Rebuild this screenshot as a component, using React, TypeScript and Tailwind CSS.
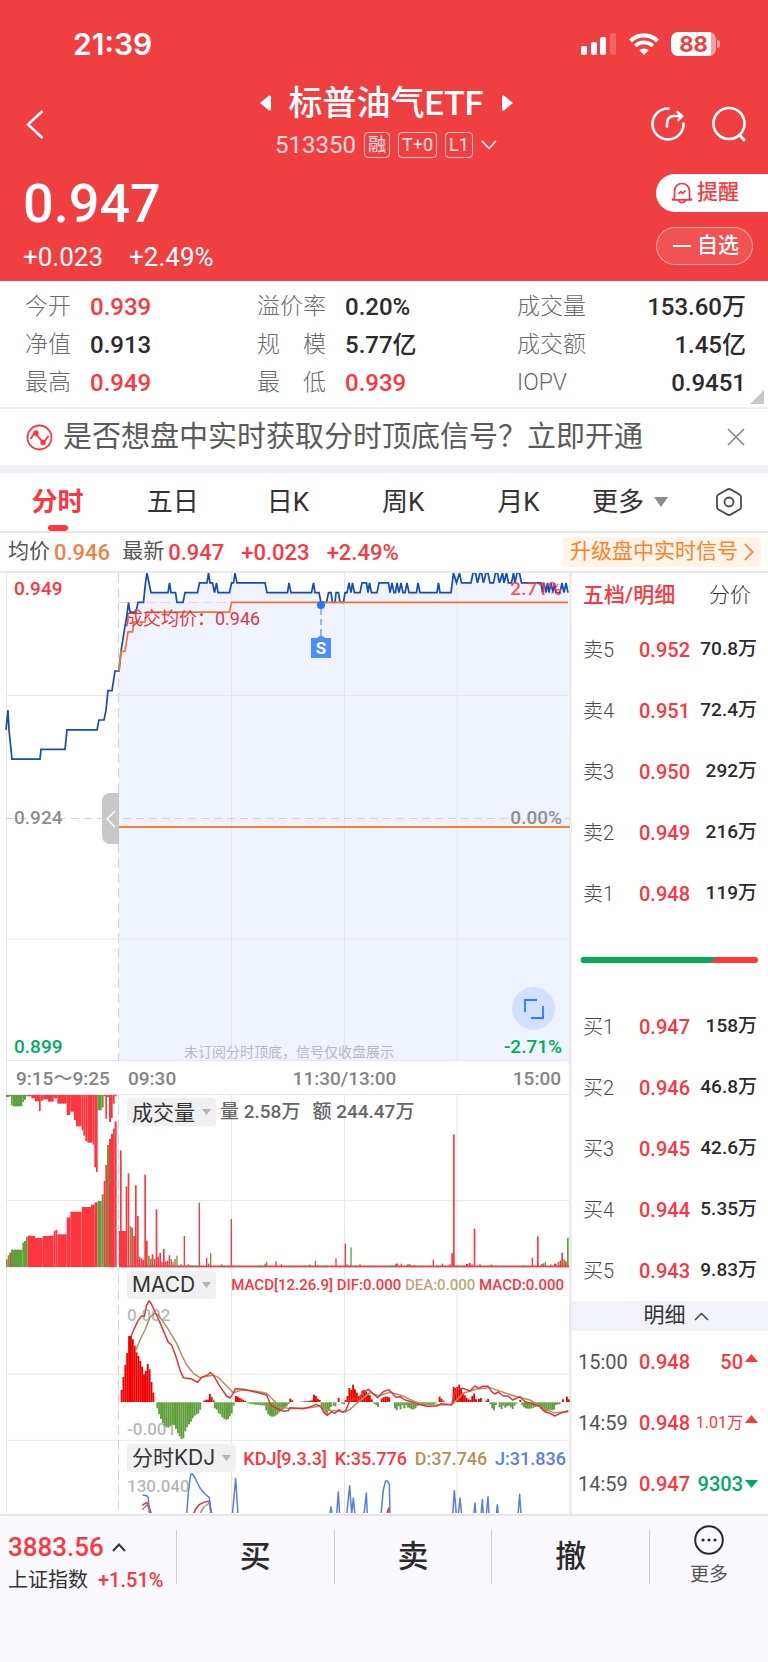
import { ReactNode } from "react";
import { clsx } from "clsx";

type Point = [number, number];
// x, width, height, up (red) or down (green)
type Bar = [number, number, number, "r" | "g"];

const RED = "#fd3640";
const GREEN = "#5fa03c";
const GRID = "#e6e6e8";

const PRICE: Point[] = [
  [6, 933], [8, 935], [9, 933], [12, 930], [40, 930], [41, 931], [65, 931], [67, 933], [97, 933],
  [99, 934], [104, 934], [106, 935], [108, 937], [112, 937], [115, 939], [119, 939], [121, 941],
  [125, 943.6], [126.5, 944.4], [128.5, 946], [130, 945], [136, 945], [138, 946], [143.5, 946],
  [145.5, 948], [147, 949], [151, 947], [168, 947], [169.5, 948], [171, 947], [175.5, 947],
  [177, 946], [183, 946], [185, 947], [197.5, 947], [199.5, 948], [207, 948], [208.5, 949],
  [210, 948], [212.5, 948], [214.5, 947], [216.5, 948], [218, 947], [229.5, 947], [231.5, 948],
  [233.5, 948], [235, 949], [237, 948], [265, 948], [267, 947], [287.5, 947], [289, 948],
  [291, 947], [311.5, 947], [313.5, 948], [315, 947], [319, 947], [321, 946], [326.5, 946],
  [328.5, 947], [331, 947], [332.5, 946], [335, 946], [336, 947], [338.5, 947], [340, 946],
  [343.5, 946], [345, 947], [347, 947], [349, 948], [351, 947], [352.5, 948], [354.5, 947],
  [360, 947], [362, 948], [366.5, 948], [368, 947], [369.5, 948], [371.5, 947], [377, 947],
  [379, 948], [388.5, 948], [390, 947], [392, 948], [394, 947], [395.5, 947], [397, 948],
  [399, 947], [401, 948], [403, 947], [405, 947], [407, 948], [409, 947], [416.5, 947],
  [418, 948], [420, 947], [437, 947], [438.5, 948], [440, 947], [451, 947], [453.5, 949],
  [456.5, 948], [459.5, 949], [461.5, 948], [471, 948], [473, 949], [475.5, 949], [477.5, 948],
  [480, 949], [481.5, 949], [483.5, 948], [486, 949], [488, 949], [490, 948], [493.5, 948],
  [495.5, 949], [497.5, 949], [499.5, 948], [502.5, 949], [504, 948], [506.5, 949], [508.5, 948],
  [511.5, 948], [513.5, 949], [515, 948], [517, 949], [519.5, 949], [521.5, 948], [541, 948],
  [542.5, 947], [544, 948], [546, 947], [547.5, 948], [549, 947], [551, 948], [553, 947],
  [554.5, 948], [556, 947], [560, 947], [562, 948], [564, 947], [566, 948], [568, 947],
];

const AVERAGE: Point[] = [
  [119, 939], [121, 941], [125, 941], [128, 943], [132.5, 943], [134, 944], [145, 944],
  [146.5, 945], [229.5, 945], [231.5, 946], [568, 946],
];

const AUCTION_TOP: Bar[] = [
  [18, 10, 6, "g"], [28, 5, 4, "r"], [33, 5, 31, "g"], [38, 29, 34, "g"], [67, 5, 21, "g"],
  [72, 6, 14, "g"], [78, 5, 4, "g"], [83, 11, 4, "r"], [94, 11, 10, "r"], [105, 12, 19, "r"],
  [117, 5, 48, "r"], [122, 8, 17, "r"], [130, 14, 13, "r"], [144, 17, 20, "r"], [161, 11, 10, "r"],
  [172, 28, 26, "r"], [200, 11, 60, "r"], [211, 11, 50, "r"], [222, 6, 75, "r"], [228, 17, 94, "r"],
  [245, 5, 106, "r"], [250, 6, 122, "r"], [256, 6, 138, "r"], [262, 16, 143, "r"],
  [278, 5, 149, "r"], [283, 5, 217, "r"], [288, 5, 231, "r"], [293, 12, 46, "g"],
  [305, 6, 38, "g"], [311, 5, 4, "r"], [316, 5, 71, "r"], [321, 6, 6, "g"], [327, 6, 81, "r"],
  [333, 5, 69, "r"], [338, 6, 26, "r"], [344, 6, 4, "r"],
];

const VOLUME: Bar[] = [
  [18, 5, 23, "g"], [23, 5, 35, "g"], [28, 5, 43, "r"], [33, 34, 52, "g"], [67, 5, 73, "g"],
  [72, 6, 78, "g"], [78, 5, 90, "g"], [83, 22, 94, "r"], [105, 23, 87, "r"], [128, 22, 93, "r"],
  [150, 11, 94, "r"], [161, 5, 107, "r"], [166, 6, 112, "r"], [172, 28, 98, "r"],
  [200, 11, 149, "r"], [211, 34, 166, "r"], [245, 28, 180, "r"], [273, 11, 187, "r"],
  [284, 9, 194, "r"], [293, 12, 198, "g"], [305, 6, 218, "g"], [311, 5, 258, "r"],
  [316, 5, 306, "r"], [321, 6, 366, "g"], [327, 6, 384, "r"], [333, 6, 399, "r"],
  [339, 5, 415, "r"], [344, 6, 437, "r"],
  [357, 21, 108, "r"], [360, 5, 350, "r"], [377, 5, 242, "r"], [383, 5, 281, "r"],
  [389, 5, 122, "g"], [394, 5, 118, "r"], [400, 5, 93, "r"], [405, 5, 245, "r"],
  [411, 5, 153, "r"], [416, 5, 31, "r"], [422, 5, 26, "r"], [427, 5, 21, "r"], [433, 5, 277, "r"],
  [438, 5, 79, "r"], [444, 5, 34, "g"], [450, 5, 25, "g"], [455, 5, 38, "r"], [461, 5, 24, "r"],
  [467, 5, 173, "r"], [472, 5, 31, "r"], [478, 5, 42, "r"], [484, 4, 15, "r"], [489, 5, 54, "r"],
  [495, 5, 17, "r"], [501, 4, 18, "r"], [506, 5, 35, "r"], [512, 4, 23, "g"], [517, 4, 16, "g"],
  [523, 4, 24, "r"], [529, 4, 34, "g"], [541, 4, 8, "r"], [551, 4, 93, "r"], [563, 4, 8, "r"],
  [596, 4, 193, "r"], [618, 4, 27, "r"], [624, 4, 10, "r"], [630, 4, 42, "g"], [663, 4, 8, "r"],
  [692, 4, 144, "r"], [793, 4, 10, "g"], [798, 4, 16, "g"], [826, 4, 17, "r"], [842, 4, 8, "r"],
  [927, 4, 7, "r"], [944, 4, 18, "g"], [950, 4, 6, "r"], [1006, 4, 26, "r"], [1034, 4, 70, "r"],
  [1039, 4, 8, "r"], [1051, 4, 59, "g"], [1078, 4, 8, "r"], [1186, 8, 10, "r"],
  [1202, 4, 10, "r"], [1220, 12, 8, "g"], [1241, 4, 6, "r"], [1298, 4, 22, "r"],
  [1325, 4, 10, "r"], [1348, 4, 8, "r"], [1354, 5, 41, "r"], [1359, 5, 398, "r"],
  [1398, 6, 9, "r"], [1406, 6, 12, "r"], [1414, 4, 8, "r"], [1421, 5, 115, "r"],
  [1438, 4, 8, "r"], [1472, 5, 7, "r"], [1595, 4, 28, "r"], [1611, 5, 92, "r"],
  [1623, 5, 9, "g"], [1628, 5, 11, "g"], [1634, 4, 15, "g"], [1651, 4, 8, "g"],
  [1662, 8, 10, "r"], [1673, 5, 15, "g"], [1679, 5, 19, "r"], [1684, 5, 43, "r"],
  [1690, 5, 23, "g"], [1695, 5, 17, "r"], [1701, 5, 88, "g"],
];

// start x followed by the signed heights of the bars, one bar every 5.6 units
const MACD_RUNS: [number, number[]][] = [
  [362, [36, 75, 111, 147, 198, 198, 188, 169, 149, 138, 123, 106, 83, 93, 114, 98, 60, 28]],
  [469, [-18, -35, -50, -62, -71, -75, -76, -71, -66, -68, -79, -92, -102, -110, -108, -87, -75, -66, -58, -48, -40, -36, -33, -22]],
  [610, [4, 7, 7, 24, 14, 5]],
  [642, [-18, -22, -33, -36, -45, -50, -52, -50, -42, -33, -10]],
  [705, [18, 16, 12, 10, 6, 3]],
  [740, [-2, -4, -5, -6, -7, -7, -8, -9, -9, -10, -24, -35, -40, -43, -43, -40, -36, -30, -26, -22, -16, -12, -5]],
  [868, [10, 5]],
  [900, [1, 1, 2, 2, 3, 4, 5, 22, 18, 10, 6]],
  [962, [-12, -24, -31, -34, -26, -14]],
  [998, [-10, -12]],
  [1013, [12]],
  [1024, [-4, -6]],
  [1034, [6, 18, 42, 36, 52, 38, 28, 18, 22, 34, 36, 30, 24, 20, 8]],
  [1120, [-4, -8, -14]],
  [1142, [10, 14, 16, 16, 14]],
  [1182, [-18, -24, -12, -21, -8, -18, -9, -15, -18, -21, -21, -18, -12, -8, -8, -8, -7, -7, -8, -8, -7, -6, -3]],
  [1316, [16, 10, 4]],
  [1358, [45, 42, 45, 52, 42, 28, 20, 12, 8, 6, 18, 25, 8]],
  [1434, [9, 12]],
  [1456, [4, 9]],
  [1468, [-6, -18, -24, -8]],
  [1496, [-14, -20, -10, -16, -12, -10, -15, -20, -10, -4]],
  [1558, [6]],
  [1564, [-9, -15, -18, -19, -19, -18, -16, -14, -12, -14, -20, -26, -28, -28, -26, -22, -24, -22, -8, -6, -6]],
  [1686, [8]],
  [1698, [16, 8]],
];

const DIF =
  "393,230 402,208 415,180 425,168 433,169 440,135 447,123 453,130 470,165 485,200 505,247 515,255 528,290 540,330 550,353 575,357 593,367 605,352 625,344 630,337 640,345 660,380 680,408 690,414 700,400 706,386 730,388 770,397 800,405 812,435 830,445 850,454 865,452 870,443 910,446 932,440 950,433 962,440 972,458 982,466 995,455 1005,460 1016,449 1028,457 1038,450 1048,425 1060,415 1075,420 1090,398 1105,388 1115,397 1133,413 1150,395 1167,389 1188,412 1200,410 1215,420 1235,425 1255,433 1280,439 1310,438 1325,431 1355,434 1362,405 1370,390 1390,385 1410,393 1425,378 1437,385 1447,379 1465,379 1475,395 1485,402 1495,396 1510,408 1525,408 1538,420 1560,410 1575,425 1600,432 1620,440 1635,455 1650,460 1665,468 1680,460 1705,452";
const DEA =
  "408,270 420,240 435,210 450,172 463,160 475,165 500,200 530,250 545,285 560,315 580,340 600,353 625,348 640,346 655,352 680,378 700,398 725,390 760,392 800,400 820,420 840,440 870,446 930,443 960,438 980,450 1010,453 1035,456 1050,448 1070,430 1110,398 1135,407 1170,397 1200,405 1230,418 1260,431 1300,435 1355,434 1370,420 1390,400 1430,387 1470,383 1510,397 1550,410 1590,420 1630,445 1660,458 1705,455";

const KDJ_J = [
  "428,706 440,708 445,714 448,765",
  "560,765 565,700 572,645 577,642 585,655 600,685 615,703 628,714 633,765",
  "697,765 707,657 714,765",
  "989,765 993,742 997,765",
  "1010,765 1015,697 1019,765",
  "1040,765 1049,678 1055,765 1060,715 1065,765",
  "1092,765 1099,700 1102,765",
  "1143,765 1150,690 1157,664 1163,664 1168,675 1170,765",
  "1358,765 1363,693 1369,765",
  "1375,765 1380,715 1385,765",
  "1421,765 1425,730 1428,765",
  "1443,765 1447,720 1450,765",
  "1459,765 1464,711 1467,765",
  "1489,765 1492,735 1495,765",
  "1554,765 1559,704 1563,765",
];

const toPoints = (data: Point[]) => data.map(([x, p]) => `${x},${(949 - p) * 9.8}`).join(" ");

const quotes = [
  [
    { label: "今开", value: "0.939", up: true },
    { label: "净值", value: "0.913" },
    { label: "最高", value: "0.949", up: true },
  ],
  [
    { label: "溢价率", value: "0.20%" },
    { label: "规　模", value: "5.77亿" },
    { label: "最　低", value: "0.939", up: true },
  ],
  [
    { label: "成交量", value: "153.60万" },
    { label: "成交额", value: "1.45亿" },
    { label: "IOPV", value: "0.9451" },
  ],
];

const asks = [
  ["卖5", "0.952", "70.8万"],
  ["卖4", "0.951", "72.4万"],
  ["卖3", "0.950", "292万"],
  ["卖2", "0.949", "216万"],
  ["卖1", "0.948", "119万"],
];

const bids = [
  ["买1", "0.947", "158万"],
  ["买2", "0.946", "46.8万"],
  ["买3", "0.945", "42.6万"],
  ["买4", "0.944", "5.35万"],
  ["买5", "0.943", "9.83万"],
];

const trades = [
  { time: "15:00", price: "0.948", amount: "50", up: true },
  { time: "14:59", price: "0.948", amount: "1.01万", up: true, small: true },
  { time: "14:59", price: "0.947", amount: "9303", up: false },
];

function StatusBar() {
  return (
    <div className="flex h-[86px] items-center justify-between pt-[2px] pr-12 pl-[73px]">
      <span className="font-[Inter,sans-serif] text-[30px] font-semibold">21:39</span>
      <div className="flex items-center gap-3">
        <svg width="36" height="24" viewBox="0 0 36 24" fill="#fff" aria-hidden="true">
          <rect x="0" y="14" width="6" height="9" rx="2" />
          <rect x="10" y="10" width="6" height="13" rx="2" />
          <rect x="19" y="5" width="6" height="18" rx="2" />
          <rect x="29" y="1" width="6" height="22" rx="2" opacity="0.2" />
        </svg>
        <svg width="30" height="22" viewBox="0 0 30 22" aria-hidden="true">
          <path d="M1.500 8 A19 19 0 0 1 28.500 8" fill="none" stroke="#fff" strokeWidth="4.200" />
          <path d="M6.200 13 A12.500 12.500 0 0 1 23.800 13" fill="none" stroke="#fff" strokeWidth="3.800" />
          <path d="M10.300 17.200 A7 7 0 0 1 19.700 17.200 L15 22 Z" fill="#fff" />
        </svg>
        <div className="flex items-center gap-px">
          <span className="flex h-6 w-[45px] items-center justify-center rounded-[7px] bg-linear-to-r from-white from-88% to-white/50 to-88% font-[Inter,sans-serif] text-[22px] font-bold text-[#f03f41]">
            88
          </span>
          <span className="h-2 w-[3px] rounded-r-full bg-white/50" />
        </div>
      </div>
    </div>
  );
}

function Tag({ children }: { children: ReactNode }) {
  return (
    <span className="flex h-[26px] items-center rounded-[4px] border border-white/70 px-[3px] text-[18px] leading-none text-white/85">
      {children}
    </span>
  );
}

function Header() {
  return (
    <header className="bg-[#f03f41] text-white">
      <StatusBar />
      <div className="flex h-[76px] items-center justify-between pr-[22px] pl-[26px]">
        <button type="button" aria-label="返回" className="w-[95px]">
          <svg width="18" height="30" viewBox="0 0 18 30" fill="none" stroke="#fff" strokeWidth="2.500">
            <path d="M16.500 2 L2 15.500 L16.500 29" />
          </svg>
        </button>
        <div className="flex flex-col items-center pb-1">
          <div className="flex items-center gap-[18px]">
            <button type="button" aria-label="上一只">
              <svg width="11" height="16" viewBox="0 0 11 16" fill="#fff">
                <path d="M0 8 L9 0.600 Q11 0 11 2 V14 Q11 16 9 15.400 Z" />
              </svg>
            </button>
            <h1 className="text-[34px] leading-[34px] font-medium">标普油气ETF</h1>
            <button type="button" aria-label="下一只">
              <svg width="11" height="16" viewBox="0 0 11 16" fill="#fff">
                <path d="M11 8 L2 0.600 Q0 0 0 2 V14 Q0 16 2 15.400 Z" />
              </svg>
            </button>
          </div>
          <div className="mt-3 flex items-center gap-2">
            <span className="text-[24px] leading-[26px] text-white/80">513350</span>
            <Tag>融</Tag>
            <Tag>T+0</Tag>
            <Tag>L1</Tag>
            <svg width="16" height="10" viewBox="0 0 16 10" fill="none" stroke="#fff" strokeWidth="1.500">
              <path d="M1 1 L8 8.500 L15 1" />
            </svg>
          </div>
        </div>
        <div className="flex gap-[27px]">
          <button type="button" aria-label="分享">
            <svg width="34" height="36" viewBox="0 0 34 36" fill="none" stroke="#fff" strokeWidth="2.600" strokeLinecap="round">
              <path d="M17.500 2.500 A15.500 15.500 0 1 0 32.500 17.500" />
              <path d="M16 20.500 V18 Q16 10 23 10 H30" />
              <path d="M26.500 6 L31 10 L27.500 14" />
            </svg>
          </button>
          <button type="button" aria-label="搜索">
            <svg width="34" height="36" viewBox="0 0 34 36" fill="none" stroke="#fff" strokeWidth="2.600" strokeLinecap="round">
              <circle cx="17" cy="17.500" r="15.500" />
              <path d="M27.500 29 L32 34" strokeWidth="3" />
            </svg>
          </button>
        </div>
      </div>
      <div className="flex h-[119px] items-start justify-between pt-[2px] pl-[23px]">
        <div>
          <p className="mt-2 text-[54px] leading-[64px] font-medium">0.947</p>
          <p className="mt-2 flex gap-[26px] text-[26px] leading-[26px]">
            <span>+0.023</span>
            <span>+2.49%</span>
          </p>
        </div>
        <div className="mt-[10px] flex w-28 flex-col gap-[15px]">
          <button type="button" className="flex h-[38px] items-center gap-1 rounded-l-full bg-white pl-[15px] text-[21px] font-medium text-[#fd3640]">
            <svg width="22" height="22" viewBox="0 0 22 22" fill="none" stroke="currentColor" strokeWidth="1.700" strokeLinejoin="round">
              <path d="M3.500 16 V9 A7.500 7.500 0 0 1 18.500 9 V16 L20.500 17.800 H1.500 Z" />
              <path d="M7.500 12 L10 9.500 L11.500 11.500 L14.500 8.500" />
              <path d="M7 18 Q11 23.500 15 18" />
            </svg>
            提醒
          </button>
          <button type="button" className="mr-[15px] flex h-[38px] items-center gap-[6px] rounded-full border border-white/50 bg-white/10 pl-4 text-[21px] font-medium">
            <span className="h-[2px] w-[18px] bg-white" />
            自选
          </button>
        </div>
      </div>
    </header>
  );
}

function Quotes() {
  return (
    <section className="relative grid grid-cols-[232px_1fr_229px] border-b-2 border-[#f1f1f3] pt-[7px] pr-[22px] pb-[5px] pl-[25px]">
      {quotes.map((group, i) => (
        <dl key={i}>
          {group.map(({ label, value, up }) => (
            <div key={label} className={clsx("flex h-[38px] items-center", i === 2 && "justify-between")}>
              <dt className={clsx("text-[23px] font-light text-[#6a6a6a]", i === 0 && "w-[65px]", i === 1 && "w-[88px]")}>
                {label}
              </dt>
              <dd className={clsx("text-[24px] font-medium", up ? "text-[#fd3640]" : "text-[#2b2b2b]")}>{value}</dd>
            </div>
          ))}
        </dl>
      ))}
      <svg width="14" height="14" viewBox="0 0 14 14" fill="#c8c8ca" className="absolute right-1 bottom-[3px]">
        <path d="M14 0 V14 H0 Z" />
      </svg>
    </section>
  );
}

function Banner() {
  return (
    <section className="flex h-16 items-center border-b-8 border-[#f2f3f8] pr-[23px] pl-[26px]">
      <svg width="27" height="27" viewBox="0 0 27 27" fill="none" stroke="#fd3640" strokeWidth="1.800">
        <circle cx="13.500" cy="13.500" r="12" />
        <path d="M4.500 15 L8.500 9 L17.500 18.500 L22.500 12" />
        <circle cx="10" cy="9" r="1.800" fill="#fd3640" />
        <circle cx="17" cy="18.500" r="1.800" fill="#fd3640" />
      </svg>
      <a href="#signal" className="ml-[10px] flex-1 text-[29px] leading-[36px] whitespace-nowrap text-[#5a5a5a]">
        是否想盘中实时获取分时顶底信号？立即开通
      </a>
      <button type="button" aria-label="关闭">
        <svg width="18" height="18" viewBox="0 0 18 18" stroke="#808080" strokeWidth="1.500">
          <path d="M1 1 L17 17 M17 1 L1 17" />
        </svg>
      </button>
    </section>
  );
}

function Tabs() {
  return (
    <nav className="flex h-[60px] items-center border-b-2 border-[#e9e9eb] text-[26px] text-[#333]">
      <button type="button" className="relative h-full w-[15%] font-bold text-[#fd3640]">
        分时
        <span className="absolute bottom-0 left-1/2 h-[6px] w-5 -translate-x-1/2 rounded-full bg-[#fd3640]" />
      </button>
      <button type="button" className="w-[15%]">五日</button>
      <button type="button" className="w-[15%]">日K</button>
      <button type="button" className="w-[15%]">周K</button>
      <button type="button" className="w-[15%]">月K</button>
      <button type="button" className="flex flex-1 items-center gap-[10px] pl-4">
        更多
        <svg width="14" height="10" viewBox="0 0 14 10" fill="#8c8c8c">
          <path d="M0 0 H14 L7 10 Z" />
        </svg>
      </button>
      <button type="button" aria-label="设置" className="pr-[25px]">
        <svg width="28" height="30" viewBox="0 0 28 30" fill="none" stroke="#4a4a4a" strokeWidth="1.800" strokeLinejoin="round">
          <path d="M12.500 2.400 Q14 1.600 15.500 2.400 L24.500 7.500 Q26 8.400 26 10 V20 Q26 21.600 24.500 22.500 L15.500 27.600 Q14 28.400 12.500 27.600 L3.500 22.500 Q2 21.600 2 20 V10 Q2 8.400 3.500 7.500 Z" />
          <circle cx="14" cy="15" r="4.500" />
        </svg>
      </button>
    </nav>
  );
}

function Summary() {
  return (
    <div className="flex h-10 items-center justify-between border-b-2 border-[#e9e9eb] pr-[7px] pl-2 text-[21px] text-[#555]">
      <p className="flex items-center">
        均价<span className="ml-1 text-[22px] font-medium text-[#ee8146]">0.946</span>
        <span className="ml-3">最新</span>
        <span className="ml-1 text-[22px] font-medium text-[#fd3640]">0.947</span>
        <span className="ml-[17px] text-[22px] font-medium text-[#fd3640]">+0.023</span>
        <span className="ml-[17px] text-[22px] font-medium text-[#fd3640]">+2.49%</span>
      </p>
      <a href="#upgrade" className="flex h-[30px] items-center gap-[6px] rounded-[3px] bg-[#fff3ea] px-[7px] text-[#fb8227]">
        升级盘中实时信号
        <svg width="10" height="18" viewBox="0 0 10 18" fill="none" stroke="currentColor" strokeWidth="1.800">
          <path d="M1 1 L8.500 9 L1 17" />
        </svg>
      </a>
    </div>
  );
}

function PricePanel() {
  return (
    <div className="relative h-[488px] text-[19px] leading-6 font-medium">
      <svg viewBox="0 0 570 488" preserveAspectRatio="none" className="block h-full w-full">
        <polygon
          points={`${toPoints(PRICE.filter(([x]) => x >= 119))} 570,488 119,488`}
          fill="#eff3fe"
        />
        <path d="M6.500 0 V488 M231.500 0 V488 M344.500 0 V488 M457 0 V488 M569.500 0 V488 M6 122.500 H570 M6 366 H570 M6 487.500 H570" stroke={GRID} fill="none" />
        <path d="M118.500 0 V488" stroke="#d4d4d4" strokeDasharray="10 5" />
        <path d="M6 245.500 H570" stroke="#c5d5e3" strokeDasharray="8 5" />
        <path d="M119 29.500 H231" stroke="#f9cdd4" strokeDasharray="9 5" />
        <path d="M119 254 H570" stroke="#fa7d32" strokeWidth="1.800" />
        <polyline points={toPoints(PRICE)} fill="none" stroke="#164cb4" strokeWidth="1.700" />
        <polyline points={toPoints(AVERAGE)} fill="none" stroke="#fb7032" strokeWidth="1.700" />
      </svg>
      <span className="absolute top-1 left-[14px] text-[#fd3640]">0.949</span>
      <span className="absolute top-1 right-2 text-[#fd3640]/85">2.71%</span>
      <span className="absolute top-[34px] left-[125px] text-[18px] font-normal text-[#e0393f]">成交均价：0.946</span>
      <span className="absolute top-[233px] left-[14px] text-[#8e8e8e]">0.924</span>
      <span className="absolute top-[233px] right-2 text-[#8e8e8e]">0.00%</span>
      <span className="absolute bottom-[2px] left-[14px] text-[#00ab5b]">0.899</span>
      <span className="absolute right-2 bottom-[2px] text-[#00ab5b]">-2.71%</span>
      <span className="absolute bottom-0 left-[184px] text-[14px] leading-[18px] font-normal text-[#b9b9bb]">
        未订阅分时顶底，信号仅收盘展示
      </span>
      <div className="absolute top-7 left-[56.3%] flex -translate-x-1/2 flex-col items-center">
        <span className="size-2 rounded-full bg-[#2277ff]" />
        <span className="h-[26px] border-l-2 border-dashed border-[#8db6ff]" />
        <svg width="8" height="3" viewBox="0 0 8 3" fill="#4c8dff">
          <path d="M0 3 L4 0 L8 3 Z" />
        </svg>
        <span className="flex size-5 items-center justify-center bg-[#4c8dff] text-[17px] font-bold text-white">S</span>
      </div>
      <button type="button" aria-label="收起" className="absolute top-[220px] left-[102px] flex h-[51px] w-[17px] items-center justify-center rounded-l-lg bg-[#c8c8c8]">
        <svg width="10" height="18" viewBox="0 0 10 18" fill="none" stroke="#fff" strokeWidth="1.500">
          <path d="M9 1 L1 9 L9 17" />
        </svg>
      </button>
      <button type="button" aria-label="全屏" className="absolute right-[15px] bottom-[31px] flex size-[43px] items-center justify-center rounded-full bg-[#d2e0fe]">
        <svg width="20" height="20" viewBox="0 0 20 20" fill="none" stroke="#2f7bff" strokeWidth="1.800">
          <path d="M13 1 H1 V13 M7 19 H19 V7" />
        </svg>
      </button>
    </div>
  );
}

function Chip({ children }: { children: ReactNode }) {
  return (
    <button type="button" className="flex h-7 items-center gap-[7px] rounded-[4px] bg-[#f0f0f1] px-[5px] font-[Inter,'Noto_Sans_CJK_SC',sans-serif] text-[21px] whitespace-nowrap text-[#333]">
      {children}
      <svg width="9" height="6" viewBox="0 0 9 6" fill="#b4b4b6">
        <path d="M0 0 H9 L4.500 6 Z" />
      </svg>
    </button>
  );
}

function SubPanel({
  viewBox,
  className,
  header,
  children,
  grid,
}: {
  viewBox: string;
  className: string;
  header: ReactNode;
  children: ReactNode;
  grid: string;
}) {
  return (
    <div className={clsx("relative overflow-hidden", className)}>
      <svg viewBox={viewBox} preserveAspectRatio="none" className="block h-full w-full">
        <path d={grid} stroke={GRID} strokeWidth="3" fill="none" />
        <path d="M355.500 0 V810" stroke="#d4d4d4" strokeWidth="3" strokeDasharray="30 15" />
        {children}
      </svg>
      <div className="absolute top-[3px] right-1 left-[127px] flex items-center">{header}</div>
    </div>
  );
}

function VolumePanel() {
  return (
    <SubPanel
      viewBox="0 287 1710 519"
      className="h-[173px]"
      grid="M19.500 0 V810 M694.500 0 V810 M1033.500 0 V810 M1371 0 V810 M1708.500 0 V810 M18 604 H1710 M18 804 H1710"
      header={
        <>
          <Chip>成交量</Chip>
          <span className="ml-1 text-[19px] font-medium text-[#666]">量 2.58万</span>
          <span className="ml-3 text-[19px] font-medium text-[#666]">额 244.47万</span>
        </>
      }
    >
      {AUCTION_TOP.map(([x, w, h, tone]) => (
        <rect key={x} x={x} y={287} width={w} height={h} fill={tone === "r" ? RED : GREEN} />
      ))}
      {VOLUME.map(([x, w, h, tone]) => (
        <rect key={x} x={x} y={803 - h} width={w} height={h} fill={tone === "r" ? RED : GREEN} />
      ))}
      <path d="M357 801 H1706" stroke={RED} strokeWidth="5" />
      <path d="M516 801 H1706" stroke={GREEN} strokeWidth="5" strokeDasharray="6 52 12 84 6 38" />
    </SubPanel>
  );
}

function MacdPanel() {
  return (
    <SubPanel
      viewBox="0 24 1710 519"
      className="h-[173px]"
      grid="M19.500 0 V600 M694.500 0 V600 M1033.500 0 V600 M1371 0 V600 M1708.500 0 V600 M18 343 H1710 M18 541 H1710"
      header={
        <>
          <Chip>MACD</Chip>
          <span className="ml-[15px] flex flex-1 justify-between pr-[2px] text-[15px] font-medium whitespace-nowrap text-[#fd3640]">
            <span>MACD[12.26.9]</span>
            <span>DIF:0.000</span>
            <span className="text-[#bfa67a]">DEA:0.000</span>
            <span>MACD:0.000</span>
          </span>
        </>
      }
    >
      {MACD_RUNS.flatMap(([start, heights]) =>
        heights.map((h, i) => (
          <rect
            key={`${start}-${i}`}
            x={start + i * 5.6}
            y={h > 0 ? 426 - h : 427}
            width={5.7}
            height={Math.abs(h)}
            fill={h > 0 ? "#f00000" : GREEN}
          />
        )),
      )}
      <polyline points={DEA} fill="none" stroke="#b0925a" strokeWidth="4.500" strokeLinejoin="round" />
      <polyline points={DIF} fill="none" stroke="#e2333b" strokeWidth="4.500" strokeLinejoin="round" />
    </SubPanel>
  );
}

function KdjPanel() {
  return (
    <SubPanel
      viewBox="0 544 1710 216"
      className="h-[72px]"
      grid="M19.500 0 V800 M694.500 0 V800 M1033.500 0 V800 M1371 0 V800 M1708.500 0 V800"
      header={
        <>
          <Chip>分时KDJ</Chip>
          <span className="ml-[7px] flex flex-1 justify-between text-[18px] font-medium whitespace-nowrap text-[#fd3640]">
            <span>KDJ[9.3.3]</span>
            <span>K:35.776</span>
            <span className="text-[#b0925a]">D:37.746</span>
            <span className="text-[#5a7de0]">J:31.836</span>
          </span>
        </>
      }
    >
      <g fill="none" strokeWidth="4.500" strokeLinejoin="round">
        <path d="M427 750 L440 736 L448 745 L456 765 M598 765 L612 742 L628 730 L637 765" stroke="#b0925a" />
        <path d="M427 737 L440 728 L447 740 L452 765 M580 765 Q592 726 628 725 L634 765 M1160 765 L1166 745 L1168 765" stroke="#e2333b" />
        {KDJ_J.map((points) => (
          <polyline key={points} points={points} stroke="#5a7de0" />
        ))}
      </g>
    </SubPanel>
  );
}

function Charts() {
  return (
    <div className="min-w-0">
      <PricePanel />
      <div className="relative ml-[6px] grid h-[34px] grid-cols-[113px_1fr_1fr_1fr] items-center border-x border-b border-[#e6e6e8] pt-1 text-[19px] font-medium text-[#848484]">
        <span className="pl-[9px] whitespace-nowrap">9:15～9:25</span>
        <span className="pl-2">09:30</span>
        <span className="text-center">11:30/13:00</span>
        <span className="pr-2 text-right">15:00</span>
      </div>
      <VolumePanel />
      <div className="relative">
        <MacdPanel />
        <span className="absolute top-[35px] left-[127px] text-[17px] leading-6 font-medium text-[#8e8e8e]/65">0.002</span>
        <span className="absolute bottom-0 left-[127px] text-[17px] leading-6 font-medium text-[#8e8e8e]/65">-0.001</span>
      </div>
      <div className="relative">
        <KdjPanel />
        <span className="absolute top-[33px] left-[127px] text-[17px] leading-6 font-medium text-[#8e8e8e]/65">130.040</span>
      </div>
    </div>
  );
}

function LevelTable({ rows, label }: { rows: string[][]; label: string }) {
  return (
    <table aria-label={label} className="w-full text-[20px]">
      <tbody>
        {rows.map(([name, price, amount]) => (
          <tr key={name} className="h-[61px]">
            <th scope="row" className="w-[67px] pl-[11px] text-left font-light text-[#4a4a4a]">{name}</th>
            <td className="font-medium text-[#fd3640]">{price}</td>
            <td className="pr-[11px] text-right text-[19px] font-medium whitespace-nowrap text-[#2b2b2b]">{amount}</td>
          </tr>
        ))}
      </tbody>
    </table>
  );
}

function OrderBook() {
  return (
    <aside className="border-l-2 border-[#efeff1]">
      <div className="flex h-[46px] items-center justify-between pr-[17px] pl-[11px] text-[21px]">
        <button type="button" className="font-medium text-[#fd3640]">五档/明细</button>
        <button type="button" className="font-light text-[#333]">分价</button>
      </div>
      <LevelTable rows={asks} label="卖盘" />
      <div className="flex h-[72px] items-center pr-[10px] pl-[9px]">
        <svg viewBox="0 0 178 6" preserveAspectRatio="none" className="h-[6px] w-full rounded-full">
          <rect width="178" height="6" fill="#fd3640" />
          <path d="M0 0 H137 L129 6 H0 Z" fill="#00ab5b" />
        </svg>
      </div>
      <LevelTable rows={bids} label="买盘" />
      <button type="button" className="flex h-[30px] w-full items-center justify-center gap-2 bg-[#f2f3f8] pl-3 text-[21px] text-[#333]">
        明细
        <svg width="15" height="9" viewBox="0 0 15 9" fill="none" stroke="#444" strokeWidth="1.500">
          <path d="M1 8 L7.500 1.500 L14 8" />
        </svg>
      </button>
      <table aria-label="成交明细" className="w-full text-[20px] font-medium">
        <tbody>
          {trades.map(({ time, price, amount, up, small }, i) => (
            <tr key={i} className="h-[61px]">
              <td className="w-[67px] pl-[6px] font-normal text-[#555]">{time}</td>
              <td className="text-[#fd3640]">{price}</td>
              <td className={clsx("pr-[10px]", up ? "text-[#fd3640]" : "text-[#00ab5b]")}>
                <span className="flex items-center justify-end gap-[2px] whitespace-nowrap">
                  <span className={clsx(small && "text-[16px] font-normal")}>{amount}</span>
                  <svg width="13" height="8" viewBox="0 0 13 8" fill="currentColor" className={clsx(up && "mb-2")}>
                    <path d={up ? "M6.500 0 L13 8 H0 Z" : "M0 0 H13 L6.500 8 Z"} />
                  </svg>
                </span>
              </td>
            </tr>
          ))}
        </tbody>
      </table>
    </aside>
  );
}

function TradeButton({ children }: { children: ReactNode }) {
  return (
    <button type="button" className="h-[54px] flex-1 border-l border-[#cfcfd2] text-[31px] font-medium text-[#2b2b2b]">
      {children}
    </button>
  );
}

function BottomBar() {
  return (
    <footer className="flex h-[148px] items-start border-t-2 border-[#e6e6e8] bg-[#f9f9fd] pt-[14px]">
      <a href="#index" className="w-44 pl-2 whitespace-nowrap">
        <span className="flex items-center gap-2 text-[26px] leading-[34px] font-medium text-[#fd3640]">
          3883.56
          <svg width="14" height="9" viewBox="0 0 14 9" fill="none" stroke="#333" strokeWidth="2">
            <path d="M1 8 L7 1.500 L13 8" />
          </svg>
        </span>
        <span className="flex gap-[10px] text-[20px] leading-[32px] text-[#333]">
          上证指数<span className="font-medium text-[#fd3640]">+1.51%</span>
        </span>
      </a>
      <TradeButton>买</TradeButton>
      <TradeButton>卖</TradeButton>
      <TradeButton>撤</TradeButton>
      <button type="button" className="flex h-[54px] w-[119px] flex-col items-center border-l border-[#cfcfd2] text-[19px] leading-6 text-[#555]">
        <svg width="30" height="30" viewBox="0 0 30 30" fill="none" stroke="#2b2b2b" strokeWidth="2" className="-mt-[5px] mb-2 shrink-0">
          <circle cx="15" cy="15" r="13.800" />
          <g fill="#2b2b2b" stroke="none">
            <circle cx="9" cy="15" r="1.600" />
            <circle cx="15" cy="15" r="1.600" />
            <circle cx="21" cy="15" r="1.600" />
          </g>
        </svg>
        更多
      </button>
    </footer>
  );
}

export default function App() {
  return (
    <div className="min-h-screen bg-[#f9f9fd] font-[Roboto,'Noto_Sans_CJK_SC',sans-serif]">
      <main className="bg-white">
        <Header />
        <Quotes />
        <Banner />
        <Tabs />
        <Summary />
        <div className="grid grid-cols-[minmax(0,1fr)_198px]">
          <Charts />
          <OrderBook />
        </div>
      </main>
      <BottomBar />
    </div>
  );
}
